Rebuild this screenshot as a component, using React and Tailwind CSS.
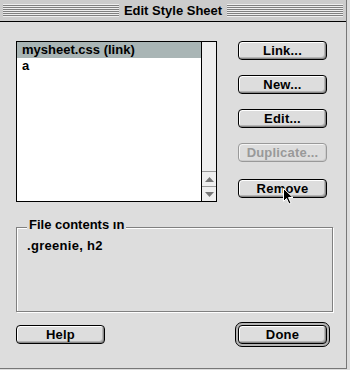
import React from 'react';

const stripes =
  'flex-1 h-[13px] bg-[repeating-linear-gradient(to_bottom,#eeeeee_0px,#eeeeee_1px,#808080_1px,#808080_2px)]';

function MacButton({ label, disabled = false, className = '' }) {
  return (
    <button
      className={`w-[89px] h-[19px] rounded-[4px] border bg-[#dddddd] text-[13px] font-bold leading-none tracking-[0.2px] flex items-center justify-center ${
        disabled
          ? 'border-[#999999] text-[#999999] shadow-[inset_1px_1px_0_#f4f4f4,inset_-1px_-1px_0_#cccccc]'
          : 'border-black text-black shadow-[inset_1px_1px_0_#ffffff,inset_-1px_-1px_0_#888888,inset_-2px_-2px_0_#b4b4b4]'
      } ${className}`}
    >
      {label}
    </button>
  );
}

function Cursor() {
  return (
    <svg className="absolute left-[283px] top-[188px]" width="11" height="17" viewBox="0 0 11 17">
      <path d="M0.5 0.5 L0.5 13.5 L3.5 10.5 L6 16 L8 15 L5.5 9.5 L10 9.5 Z" fill="black" stroke="white" strokeWidth="1" />
    </svg>
  );
}

export default function App() {
  return (
    <div
      className="relative w-[350px] h-[370px] bg-[#dddddd] overflow-hidden"
      style={{ fontFamily: '"Liberation Sans", Arial, sans-serif' }}
    >
      <div className="w-[347px] h-[369px] border-r border-b border-[#777777] flex flex-col">
        {/* title bar */}
        <div className="h-[22px] bg-[#cccccc] border-b border-black flex items-center px-[3px]">
          <div className={stripes} />
          <div className="px-[5px] text-[13px] font-bold text-black leading-none">Edit Style Sheet</div>
          <div className={stripes} />
        </div>

        <div className="flex flex-col pl-[16px] pt-[19px]">
          <div className="flex">
            {/* list */}
            <div className="w-[201px] h-[161px] border border-black bg-white flex">
              <div className="flex-1 flex flex-col">
                <div className="h-[16px] bg-[#a9b5b5] pl-[5px] text-[13px] font-bold leading-[16px]">mysheet.css (link)</div>
                <div className="h-[16px] pl-[5px] text-[13px] font-bold leading-[16px]">a</div>
              </div>
              <div className="w-[15px] border-l border-black bg-[#eeeeee] flex flex-col justify-end">
                <div className="h-[15px] border-t border-[#999999] flex items-center justify-center">
                  <svg width="9" height="5" viewBox="0 0 9 5">
                    <path d="M4.5 0 L9 5 L0 5 Z" fill="#777777" />
                  </svg>
                </div>
                <div className="h-[15px] border-t border-[#999999] flex items-center justify-center">
                  <svg width="9" height="5" viewBox="0 0 9 5">
                    <path d="M0 0 L9 0 L4.5 5 Z" fill="#777777" />
                  </svg>
                </div>
              </div>
            </div>

            {/* buttons */}
            <div className="ml-[21px] flex flex-col">
              <MacButton label="Link..." />
              <MacButton label="New..." className="mt-[15px]" />
              <MacButton label="Edit..." className="mt-[15px]" />
              <MacButton label="Duplicate..." disabled className="mt-[15px]" />
              <MacButton label="Remove" className="mt-[17px]" />
            </div>
          </div>

          {/* group box */}
          <div className="relative mt-[25px] w-[317px] h-[85px] border border-[#808080] shadow-[1px_1px_0_#ffffff,inset_1px_1px_0_#ffffff]">
            <div className="absolute left-[10px] -top-[11px] px-[2px] bg-[#dddddd] text-[13px] font-bold leading-[16px]">
              File contents ın
            </div>
            <div className="pl-[10px] pt-[10px] text-[13px] font-bold leading-[16px] tracking-[0.3px]">.greenie, h2</div>
          </div>

          {/* bottom buttons */}
          <div className="flex items-center justify-between w-[314px] mt-[10px]">
            <MacButton label="Help" />
            <div className="rounded-[7px] border border-black bg-[#b4b4b4] p-[2px]">
              <MacButton label="Done" />
            </div>
          </div>
        </div>
      </div>
      <Cursor />
    </div>
  );
}
